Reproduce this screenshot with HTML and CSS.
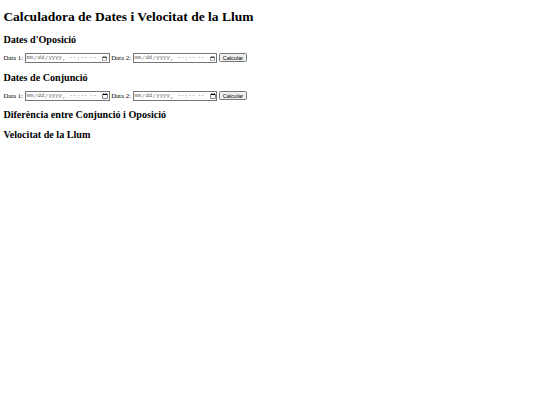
FILE: index.html
```
<!DOCTYPE html>
<html lang="ca">
<head>
<meta charset="utf-8">
<title>Calculadora de Dates i Velocitat de la Llum</title>
<link rel="stylesheet" href="styles.css">
</head>
<body>
<div class="page">
  <h1 class="title">Calculadora de Dates i Velocitat de la Llum</h1>
  <h2 class="section">Dates d'Oposició</h2>
  <div class="row">
    <label>Data 1: <input type="datetime-local" class="dt"></label>
    <label>Data 2: <input type="datetime-local" class="dt"></label>
    <button class="btn">Calcular</button>
  </div>
  <h2 class="section">Dates de Conjunció</h2>
  <div class="row">
    <label>Data 1: <input type="datetime-local" class="dt"></label>
    <label>Data 2: <input type="datetime-local" class="dt"></label>
    <button class="btn">Calcular</button>
  </div>
  <h2 class="section">Diferència entre Conjunció i Oposició</h2>
  <h2 class="section">Velocitat de la Llum</h2>
</div>
</body>
</html>
```
FILE: styles.css
```
html, body { margin: 0; padding: 0; background: #fff; }
.page {
  zoom: 0.421875;
  margin: 8px;
  font-family: "Liberation Serif", "Times New Roman", serif;
  font-size: 16px;
  color: #000;
}
.title { font-size: 32px; font-weight: bold; margin: 21.44px 0; }
.section { font-size: 24px; font-weight: bold; margin: 19.92px 0; }
.row { margin: 16px 0; }
.dt {
  box-sizing: border-box;
  width: 201px;
  font-family: "Liberation Mono", "Courier New", monospace;
  font-size: 13.33px;
  color: #666;
}
.btn { font-family: "Liberation Sans", Arial, sans-serif; font-size: 13.33px; }
```
